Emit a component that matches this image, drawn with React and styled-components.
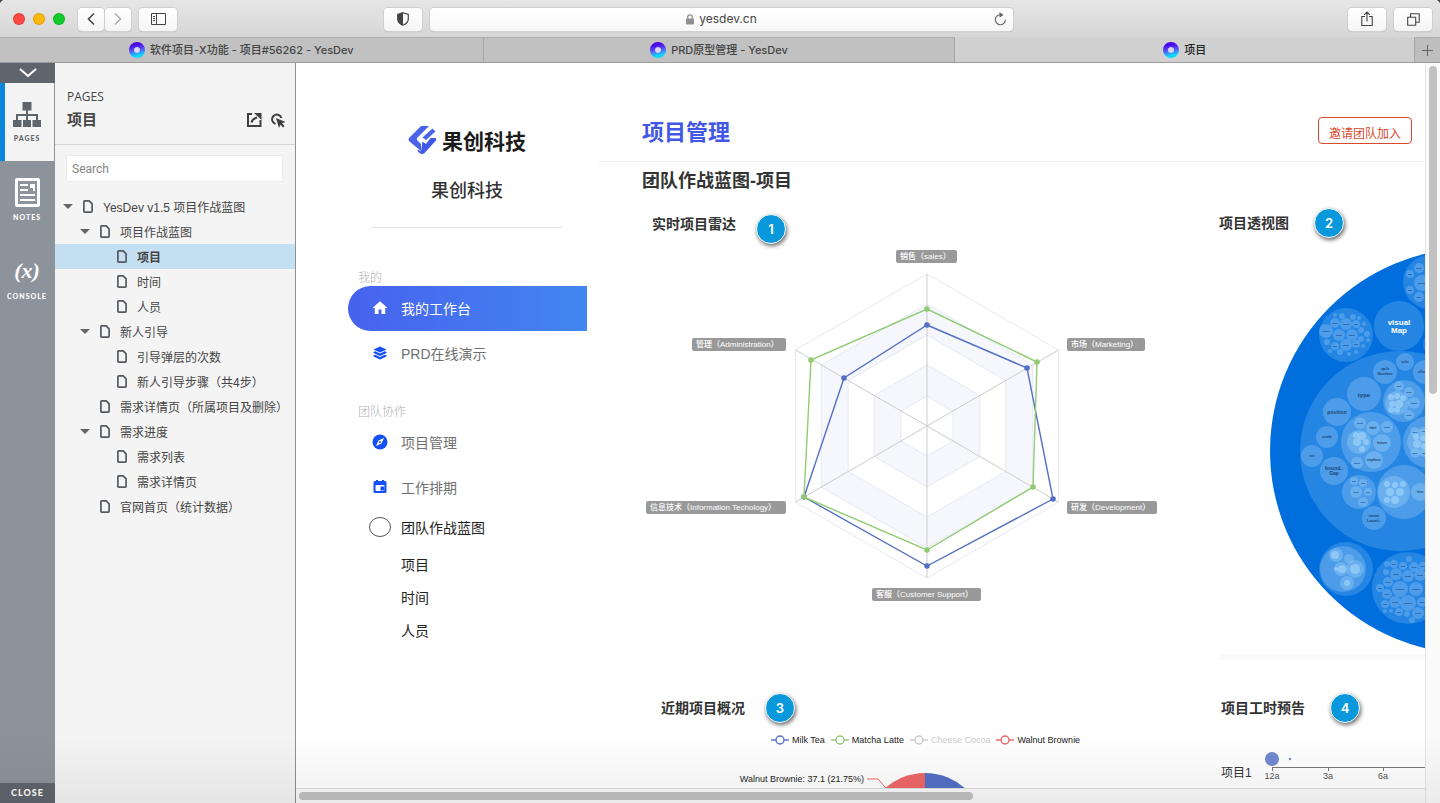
import React from "react";
import styled, { createGlobalStyle } from "styled-components";
import { MdHome } from "react-icons/md";

const GlobalStyle = createGlobalStyle`
  * {
    box-sizing: border-box;
  }
  body {
    margin: 0;
    background: #4a4550;
    font-family: "Liberation Sans", "Noto Sans CJK SC", sans-serif;
    color: #333;
  }
  h1, h2, h3, p, ul {
    margin: 0;
    padding: 0;
    font-weight: 500;
  }
  ul {
    list-style: none;
  }
  a {
    color: inherit;
    text-decoration: none;
  }
  button, input {
    font-family: inherit;
  }
  svg {
    display: block;
    flex: none;
  }
`;

const Window = styled.div`
  position: relative;
  display: flex;
  flex-direction: column;
  height: 100vh;
  overflow: hidden;
  border-radius: 5px 5px 0 0;
  background: #fff;
`;

const Shade = styled.div`
  position: absolute;
  left: 0;
  right: 0;
  bottom: 0;
  height: 70px;
  pointer-events: none;
  background: linear-gradient(rgba(0, 0, 0, 0), rgba(0, 0, 0, 0.06));
`;

/* browser chrome */

const Toolbar = styled.header`
  flex: none;
  display: grid;
  grid-template-columns: 384fr 629fr 427fr;
  align-items: center;
  height: 37px;
  padding-top: 1px;
  background: linear-gradient(#e6e6e6, #d6d6d6);
`;

const ToolGroup = styled.div`
  display: flex;
  align-items: center;
  gap: 8px;
  min-width: 0;
  justify-content: ${props => (props.$end ? "flex-end" : "flex-start")};
  padding-left: ${props => (props.$start ? "13px" : "0")};
  padding-right: ${props => (props.$end ? "8px" : "0")};
`;

const Lights = styled.div`
  display: flex;
  gap: 8px;
  margin-right: 5px;
`;

const Light = styled.span`
  width: 12px;
  height: 12px;
  border-radius: 50%;
  background: ${props => props.$color};
  box-shadow: inset 0 0 0 1px rgba(0, 0, 0, 0.12);
`;

const Pair = styled.div`
  display: flex;
  gap: 1px;
`;

const ToolButton = styled.button`
  display: flex;
  align-items: center;
  justify-content: center;
  width: ${props => (props.$narrow ? "26px" : "38px")};
  height: 23px;
  padding: 0;
  border: 0;
  border-radius: 4px;
  background: linear-gradient(#fff, #f5f5f5);
  box-shadow: 0 0 0 1px #cfcfcf, 0 1px 1px #aaa;
  color: #444;
`;

const AddressBar = styled.div`
  flex: 1;
  display: grid;
  grid-template-columns: 20px 1fr 20px;
  align-items: center;
  height: 23px;
  padding: 0 3px;
  border-radius: 4px;
  background: linear-gradient(#fff, #f7f7f7);
  box-shadow: 0 0 0 1px #cfcfcf, 0 1px 1px #aaa;
`;

const Address = styled.div`
  grid-column: 2;
  display: flex;
  align-items: center;
  justify-content: center;
  gap: 5px;
  font: 12px/16px Inter, sans-serif;
  color: #444;
`;

const ReloadButton = styled.button`
  display: flex;
  justify-content: center;
  padding: 0;
  border: 0;
  background: none;
  color: #666;
`;

const TabBar = styled.nav`
  flex: none;
  display: flex;
  height: 26px;
  border-bottom: 1px solid #9b9b9b;
`;

const Tab = styled.a`
  flex: ${props => props.$grow} 1 0;
  min-width: 0;
  display: flex;
  align-items: center;
  justify-content: center;
  gap: 5px;
  border-top: 1px solid ${props => (props.$active ? "#d3d3d3" : "#adadad")};
  border-right: 1px solid #a5a5a5;
  background: ${props => (props.$active ? "#d0d0d0" : "#c1c1c1")};
  font: 500 11px/16px Inter, "Noto Sans CJK SC", sans-serif;
  color: ${props => (props.$active ? "#222" : "#444")};
  white-space: nowrap;
`;

const NewTab = styled.button`
  display: flex;
  align-items: center;
  justify-content: center;
  width: 25px;
  padding: 0;
  border: 0;
  border-top: 1px solid #adadad;
  background: #bebebe;
  color: #666;
`;

const Body = styled.div`
  flex: 1;
  display: flex;
  min-height: 0;
`;

/* icon rail */

const Rail = styled.aside`
  flex: none;
  display: flex;
  flex-direction: column;
  width: 55px;
  background: #8c939b;
  color: #fff;
`;

const RailBar = styled.button`
  display: flex;
  align-items: center;
  justify-content: center;
  height: 20px;
  padding: 0;
  border: 0;
  background: #5f656c;
  color: #fff;
  font: 900 9px/12px Lato, sans-serif;
  letter-spacing: 1px;
`;

const RailItem = styled.button`
  display: flex;
  flex-direction: column;
  align-items: center;
  justify-content: center;
  gap: 5px;
  height: 78px;
  padding: 0;
  border: 0;
  border-right: 1px solid #8c939b;
  background: ${props => (props.$active ? "#f4f4f4" : "none")};
  box-shadow: ${props => (props.$active ? "inset 5px 0 0 #0a87dd" : "none")};
  color: ${props => (props.$active ? "#5f656c" : "#fff")};
  font: 900 7px/10px Lato, sans-serif;
  letter-spacing: 1px;
`;

const Variable = styled.span`
  font: italic bold 22px/30px "Liberation Serif", serif;
  letter-spacing: 0;
`;

const Spacer = styled.div`
  flex: 1;
`;

/* page tree */

const Sidebar = styled.aside`
  flex: none;
  width: 241px;
  border-right: 1px solid #8f8f8f;
  background: #f4f4f4;
  color: #444;
`;

const SidebarHead = styled.div`
  height: 82px;
  padding: 26px 9px 0 12px;
  border-bottom: 1px solid #d5d5d5;
`;

const SidebarLabel = styled.p`
  font: 500 12px/16px "Open Sans", sans-serif;
`;

const SidebarTitle = styled.div`
  display: flex;
  align-items: center;
  gap: 8px;
  height: 30px;

  h2 {
    flex: 1;
    font-size: 15px;
    font-weight: 700;
    line-height: 24px;
  }
`;

const IconButton = styled.button`
  padding: 0;
  border: 0;
  background: none;
  color: #3f3f3f;
`;

const Search = styled.input`
  display: block;
  width: 217px;
  height: 27px;
  margin: 10px 0 12px 11px;
  padding: 0 5px;
  border: 1px solid #ececec;
  background: #fff;
  font-family: Roboto, sans-serif;
  font-size: 12px;

  &::placeholder {
    color: #858585;
  }
`;

const TreeRow = styled.li`
  display: flex;
  align-items: center;
  height: 25px;
  padding-left: ${props => 8 + props.$level * 17}px;
  background: ${props => (props.$selected ? "#c4dff1" : "none")};
  font-size: 12px;
  font-weight: ${props => (props.$selected ? 700 : 400)};
  white-space: nowrap;

  a {
    display: flex;
    align-items: center;
    gap: 10px;
  }
`;

const Toggle = styled.span`
  width: 20px;
`;

const ToggleButton = styled.button`
  display: block;
  padding: 0;
  border: 0;
  background: none;
  color: #666;
`;

/* prototype viewport */

const Viewport = styled.div`
  flex: 1;
  min-width: 0;
  display: grid;
  grid-template-columns: minmax(0, 1fr) 15px;
  grid-template-rows: minmax(0, 1fr) 15px;
`;

const Canvas = styled.div`
  display: flex;
  overflow: hidden;
`;

const TrackY = styled.div`
  grid-row: span 2;
  padding: 3px 3px 0;
  border-left: 1px solid #e6e6e6;
  background: #fafafa;
`;

const ThumbY = styled.div`
  width: 8px;
  height: 328px;
  border-radius: 4px;
  background: #c1c1c1;
`;

const TrackX = styled.div`
  padding: 3px;
  border-top: 1px solid #e0e0e0;
  background: #fafafa;
`;

const ThumbX = styled.div`
  width: 60%;
  height: 8px;
  border-radius: 4px;
  background: #c1c1c1;
`;

const Menu = styled.nav`
  flex: none;
  width: 302px;
  padding-top: 63px;
`;

const Brand = styled.div`
  display: flex;
  flex-direction: column;
  align-items: center;
  margin-left: 40px;
`;

const Logo = styled.div`
  display: flex;
  align-items: center;
  gap: 5px;
  height: 28px;
  font-size: 21px;
  font-weight: 700;
  color: #1c1c1c;
`;

const TeamName = styled.p`
  margin-top: 23px;
  font-size: 18px;
  line-height: 28px;
`;

const Divider = styled.div`
  width: 191px;
  height: 1px;
  margin-top: 22px;
  background: #e4e4e4;
`;

const MenuLabel = styled.p`
  margin-top: ${props => (props.$first ? "42px" : "28px")};
  padding-left: 62px;
  font-size: 12px;
  font-weight: 300;
  line-height: 16px;
  color: #b0b0b0;
`;

const MenuItem = styled.a`
  display: grid;
  grid-template-columns: 22px 1fr;
  align-items: center;
  justify-items: start;
  gap: 10px;
  height: 45px;
  margin-left: 52px;
  margin-right: 11px;
  padding-left: 21px;
  padding-bottom: 1px;
  border-radius: 23px 0 0 23px;
  background: ${props =>
    props.$active ? "linear-gradient(90deg, #4762ee, #4286f0)" : "none"};
  color: ${props => (props.$active ? "#fff" : "#707070")};
  font-size: 14px;

  svg {
    justify-self: center;
    color: ${props => (props.$active ? "#fff" : "#1450f5")};
  }
`;

const MenuGroup = styled(MenuItem)`
  height: 34px;
  margin-bottom: 5px;
  color: #222;
`;

const SubItem = styled.a`
  display: block;
  padding-left: 105px;
  font-size: 14px;
  line-height: 33px;
  color: #222;
`;

const Main = styled.main`
  flex: 1;
  min-width: 0;
  padding-top: 41px;
`;

const MainHead = styled.div`
  display: flex;
  align-items: flex-start;
  justify-content: space-between;
  height: 58px;
  padding: 13px 13px 0 44px;
  border-bottom: 1px solid #efefef;

  h1 {
    font-size: 22px;
    font-weight: 700;
    line-height: 32px;
    color: #4257e4;
  }
`;

const InviteButton = styled.button`
  width: 94px;
  height: 27px;
  padding: 3px 0 0;
  border: 1px solid #d9482f;
  border-radius: 4px;
  background: #fff;
  color: #d9482f;
  font-size: 12px;
`;

const BoardTitle = styled.h2`
  padding-left: 44px;
  font-size: 18px;
  font-weight: 700;
  line-height: 38px;
`;

const Board = styled.div`
  display: grid;
  grid-template-columns: 577px 406px;
  row-gap: 33px;
  padding-left: 44px;
`;

const Panel = styled.section`
  padding-top: ${props => props.$top || 0}px;
`;

const PanelHead = styled.div`
  display: flex;
  align-items: ${props => (props.$raised ? "flex-start" : "center")};
  gap: ${props => (props.$wide ? "25px" : "20px")};
  height: 30px;
  padding-left: ${props => props.$indent || 0}px;

  h3 {
    font-size: 14px;
    font-weight: 700;
    line-height: 20px;
  }
`;

const Marker = styled.span`
  display: flex;
  align-items: center;
  justify-content: center;
  width: 30px;
  height: 30px;
  border: 1px solid #fff;
  border-radius: 50%;
  background: #0a98dd;
  box-shadow: 1px 2px 4px rgba(0, 0, 0, 0.6);
  color: #fff;
  font: 600 13px/16px Inter, sans-serif;
`;

const RadarChart = styled.svg`
  margin-top: 1px;
`;

const BubbleChart = styled.svg`
  margin: 10px 0 0 51px;
`;

const PanelFoot = styled.div`
  height: 6px;
  background: #fafafa;
`;

const Legend = styled.ul`
  display: flex;
  gap: 6px;
  margin-top: 10px;
  padding-left: 129px;
  font-size: 9px;
  line-height: 14px;
`;

const LegendItem = styled.li`
  display: flex;
  align-items: center;
  gap: 3px;
  color: ${props => (props.$off ? "#ccc" : "#222")};
  white-space: nowrap;
`;

const HourRow = styled.div`
  display: flex;
  gap: 12px;
  margin-top: 24px;
  padding-left: 2px;
  font-size: 12px;

  span {
    padding-top: 16px;
    line-height: 20px;
    white-space: nowrap;
  }
`;

const Favicon = ({ id }) => (
  <svg width="16" height="16" viewBox="0 0 16 16">
    <defs>
      <linearGradient id={id} x1="0.4" y1="0" x2="0.6" y2="1">
        <stop offset="0" stopColor="#4a05e8" />
        <stop offset="0.5" stopColor="#5a55f5" />
        <stop offset="1" stopColor="#0cd8ff" />
      </linearGradient>
    </defs>
    <circle cx="8" cy="8" r="5.4" fill="none" stroke={`url(#${id})`} strokeWidth="5.2" />
    <circle cx="8" cy="8" r="2.8" fill="#d9d4f5" />
  </svg>
);

const Stroke = ({ w, h, d, width = 1.2 }) => (
  <svg
    width={w}
    height={h}
    viewBox={`0 0 ${w} ${h}`}
    fill="none"
    stroke="currentColor"
    strokeWidth={width}
  >
    <path d={d} />
  </svg>
);

const PageIcon = () => (
  <svg width="10" height="13" viewBox="0 0 10 13">
    <path
      d="M1.700 0.900H6.200L9.100 3.800V11.300Q9.100 12.100 8.300 12.100H1.700Q0.900 12.100 0.900 11.300V1.700Q0.900 0.900 1.700 0.900Z"
      fill="none"
      stroke="#555a60"
      strokeWidth="1.700"
    />
  </svg>
);

const LogoMark = () => (
  <svg width="29" height="30" viewBox="0 0 29 30">
    <path
      d="M13 1H21L9.500 12.500Q8 14 9.500 15.500L13 19V26L1.500 16.500Q-0.500 14.500 1.500 12.500Z"
      fill="#4a63ea"
    />
    <path d="M24.500 3.500L27.500 6.500L18 15L14.500 12.500Z" fill="#4a63ea" />
    <path
      d="M14.500 16.500L18 19L22.500 13H27.500Q29 14 28 15.500L16.500 28Q14 30 11.500 28L9.500 26L10 24.500L13 26.500Z"
      fill="#3f59e6"
    />
  </svg>
);

const LayersIcon = () => (
  <svg width="14" height="14" viewBox="0 0 14 14" fill="currentColor">
    <path d="M7 0.500L13.500 3.500L7 6.500L0.500 3.500Z" />
    <path d="M0.500 6L2.300 5.200L7 7.400L11.700 5.200L13.500 6V7L7 10L0.500 7Z" />
    <path d="M0.500 9.500L2.300 8.700L7 10.900L11.700 8.700L13.500 9.500V10.500L7 13.500L0.500 10.500Z" />
  </svg>
);

const CompassIcon = () => (
  <svg width="16" height="16" viewBox="0 0 16 16">
    <circle cx="8" cy="8" r="7.500" fill="currentColor" />
    <path d="M12 4L9.500 9.500L4 12L6.500 6.500Z" fill="#fff" />
    <circle cx="8" cy="8" r="1" fill="currentColor" />
  </svg>
);

const ScheduleIcon = () => (
  <svg width="14" height="14" viewBox="0 0 14 14">
    <path
      d="M2 1H3V0H5V1H9V0H11V1H12Q13.500 1 13.500 2.500V11.500Q13.500 13 12 13H2Q0.500 13 0.500 11.500V2.500Q0.500 1 2 1Z"
      fill="currentColor"
    />
    <rect x="2.500" y="5" width="9" height="6" rx="1" fill="#fff" />
    <rect x="7.500" y="6.500" width="4" height="4" fill="currentColor" />
  </svg>
);

const pages = [
  { level: 0, text: "YesDev v1.5 项目作战蓝图", open: true },
  { level: 1, text: "项目作战蓝图", open: true },
  { level: 2, text: "项目", selected: true },
  { level: 2, text: "时间" },
  { level: 2, text: "人员" },
  { level: 1, text: "新人引导", open: true },
  { level: 2, text: "引导弹层的次数" },
  { level: 2, text: "新人引导步骤（共4步）" },
  { level: 1, text: "需求详情页（所属项目及删除）" },
  { level: 1, text: "需求进度", open: true },
  { level: 2, text: "需求列表" },
  { level: 2, text: "需求详情页" },
  { level: 1, text: "官网首页（统计数据）" }
];

// radar, centre 285,181
const hexagon = r =>
  [0, 1, 2, 3, 4, 5]
    .map(i => {
      const a = (Math.PI / 3) * i - Math.PI / 2;
      return `${285 + r * Math.cos(a)},${181 + r * Math.sin(a)}`;
    })
    .join(" ");

const rings = [
  { r: 152, fill: "#fff" },
  { r: 122, fill: "#f6f7fc" },
  { r: 91, fill: "#fff" },
  { r: 61, fill: "#f6f7fc" },
  { r: 30, fill: "#fff" }
];

const series = [
  {
    color: "#5470c6",
    points: [[285, 80], [385, 123], [411, 254], [285, 321], [162, 252], [202, 133]]
  },
  {
    color: "#91cc75",
    points: [[285, 64], [395, 117], [391, 242], [285, 305], [162, 252], [169, 115]]
  }
];

const radarLabels = [
  { x: 254, y: 5, w: 61, text: "销售（sales）" },
  { x: 50, y: 93, w: 94, text: "管理（Administration）" },
  { x: 425, y: 93, w: 78, text: "市场（Marketing）" },
  { x: 4, y: 256, w: 140, text: "信息技术（Information Techology）" },
  { x: 425, y: 256, w: 90, text: "研发（Development）" },
  { x: 230, y: 343, w: 109, text: "客服（Customer Support）" }
];

const Radar = () => (
  <RadarChart width="520" height="360" viewBox="0 0 520 360">
    {rings.map(ring => (
      <polygon key={ring.r} points={hexagon(ring.r)} fill={ring.fill} stroke="#e6e9f1" />
    ))}
    <path
      d="M285 29V333M153.500 105L416.500 257M416.500 105L153.500 257"
      stroke="#ccc"
      fill="none"
    />
    {series.map(item => (
      <g key={item.color} fill={item.color}>
        <polygon
          points={item.points.join(" ")}
          fill="none"
          stroke={item.color}
          strokeWidth="1.4"
        />
        {item.points.map(([x, y]) => (
          <circle key={`${x}-${y}`} cx={x} cy={y} r="2.800" />
        ))}
      </g>
    ))}
    {radarLabels.map(label => (
      <g key={label.text}>
        <rect x={label.x} y={label.y} width={label.w} height="13" rx="2" fill="#999" />
        <text x={label.x + 4} y={label.y + 9} fontSize="8" fontWeight="500" fill="#fff">
          {label.text}
        </text>
      </g>
    ))}
  </RadarChart>
);

// [cx, cy, r], one list per nesting depth
const groups = [
  [130, 203, 100], [129, 78, 25], [160, 34, 27], [76, 87, 27], [166, 96, 13],
  [76, 321, 27], [138, 340, 36]
];

const nodes = [
  [94, 146, 17], [67, 164, 14], [115, 124, 12], [135, 114, 9], [155, 124, 12],
  [57, 189, 11], [42, 208, 11], [64, 223, 14], [101, 194, 30], [134, 153, 21],
  [159, 194, 26], [89, 244, 17], [134, 244, 27], [104, 270, 12], [73, 321, 23],
  [56, 83, 7], [65, 75, 5], [76, 76, 6], [86, 76, 4], [69, 87, 6], [82, 87, 6],
  [65, 98, 4], [76, 97, 6], [86, 96, 4], [57, 94, 3], [91, 82, 3], [91, 91, 3],
  [72, 68, 3], [83, 69, 3], [89, 70, 2], [94, 76, 2], [97, 86, 3], [93, 98, 2],
  [70, 104, 3], [79, 106, 2], [60, 103, 2], [86, 104, 2], [65, 67, 2], [98, 92, 2],
  [149, 20, 5], [140, 26, 4], [152, 35, 8], [140, 42, 4], [149, 49, 5],
  [117, 316, 3], [124, 316, 4], [133, 318, 4], [144, 319, 5], [153, 318, 4],
  [139, 311, 3], [116, 324, 3], [126, 326, 6], [138, 328, 6], [150, 327, 6],
  [118, 334, 5], [110, 340, 4], [130, 341, 8], [146, 341, 7], [117, 346, 5],
  [115, 356, 4], [125, 354, 6], [138, 355, 8], [152, 354, 5], [129, 364, 4],
  [137, 366, 3], [148, 365, 6], [142, 372, 3], [115, 363, 2], [121, 363, 2]
];

const leaves = [
  [89, 194, 12], [112, 195, 9], [103, 180, 7], [90, 175, 6], [117, 179, 6],
  [104, 212, 9], [87, 215, 6], [127, 155, 12], [129, 138, 5], [139, 144, 5],
  [144, 155, 6], [139, 167, 5], [150, 194, 13], [145, 184, 5], [145, 205, 5],
  [154, 183, 4], [154, 205, 4], [124, 244, 16], [150, 244, 9], [84, 233, 4],
  [93, 235, 4], [86, 244, 6], [98, 244, 4], [93, 254, 5], [66, 307, 7],
  [79, 311, 5], [71, 321, 7], [85, 321, 9], [77, 335, 7]
];

const seeds = [
  [86, 187, 3], [92, 188, 4], [87, 194, 4], [96, 194, 3], [92, 201, 3],
  [121, 149, 3], [127, 148, 3], [133, 150, 3], [122, 156, 3], [129, 156, 4],
  [121, 162, 3], [127, 162, 3], [117, 236, 3], [125, 237, 3], [133, 236, 3],
  [120, 244, 4], [130, 244, 4], [117, 252, 3], [125, 252, 4], [146, 189, 3],
  [153, 190, 3], [147, 196, 4], [154, 198, 3], [65, 307, 4], [72, 321, 4],
  [85, 321, 5], [77, 335, 3], [66, 321, 2]
];

const bubbleTexts = [
  { x: 94, y: 149, size: 6, text: "type" },
  { x: 67, y: 166, size: 5, text: "position" },
  { x: 115, y: 122, size: 4, text: "split" },
  { x: 115, y: 127, size: 4, text: "Number" },
  { x: 135, y: 115, size: 3, text: "color" },
  { x: 152, y: 125, size: 3, text: "offset" },
  { x: 57, y: 190, size: 4, text: "scale" },
  { x: 42, y: 209, size: 3, text: "min" },
  { x: 64, y: 222, size: 5, text: "bound.." },
  { x: 64, y: 227, size: 5, text: "Gap" },
  { x: 104, y: 269, size: 4, text: "name" },
  { x: 104, y: 274, size: 4, text: "Locati.." },
  { x: 112, y: 196, size: 3, text: "feature" },
  { x: 103, y: 181, size: 3, text: "label" },
  { x: 104, y: 213, size: 3, text: "emphasis" },
  { x: 150, y: 245, size: 3, text: "item" }
];

const Bubbles = ({ items, fill }) => (
  <g fill={fill}>
    {items.map(([x, y, r]) => (
      <circle key={`${x}-${y}-${r}`} cx={x} cy={y} r={r} />
    ))}
  </g>
);

const labelled = (x, y) => bubbleTexts.some(t => Math.abs(t.x - x) < 3 && Math.abs(t.y - y) < 5);

const Perspective = () => (
  <BubbleChart width="406" height="406" viewBox="0 0 406 406">
    <circle cx="203" cy="203" r="203" fill="#006edd" />
    <Bubbles items={groups} fill="#2485e3" />
    <Bubbles items={nodes} fill="rgba(115, 180, 240, 0.5)" />
    <Bubbles items={leaves} fill="rgba(135, 195, 245, 0.5)" />
    <Bubbles items={seeds} fill="rgba(165, 215, 250, 0.6)" />
    <g fill="rgba(10, 60, 120, 0.45)">
      {nodes
        .concat(leaves)
        .filter(([x, y, r]) => r >= 4 && r <= 8 && !(x < 90 && y > 300) && !labelled(x, y))
        .map(([x, y, r]) => (
          <rect key={`${x}-${y}`} x={x - r / 2} y={y} width={r} height="1" />
        ))}
    </g>
    <g fill="#fff" fontSize="8" fontWeight="700" textAnchor="middle">
      <text x="129" y="77">visual</text>
      <text x="129" y="85">Map</text>
    </g>
    <g fill="#1d4675" fontWeight="700" textAnchor="middle">
      {bubbleTexts.map(item => (
        <text key={`${item.x}-${item.y}`} x={item.x} y={item.y} fontSize={item.size}>
          {item.text}
        </text>
      ))}
    </g>
  </BubbleChart>
);

const legend = [
  { text: "Milk Tea", color: "#5470c6" },
  { text: "Matcha Latte", color: "#91cc75" },
  { text: "Cheese Cocoa", color: "#ccc", off: true },
  { text: "Walnut Brownie", color: "#ee6666" }
];

const BrowserChrome = () => (
  <>
    <Toolbar>
      <ToolGroup $start>
        <Lights>
          <Light $color="#fb4943" />
          <Light $color="#fdb90c" />
          <Light $color="#14cb2e" />
        </Lights>
        <Pair>
          <ToolButton $narrow aria-label="Back">
            <Stroke w={8} h={14} width={1.6} d="M7 1.500L1.500 7L7 12.500" />
          </ToolButton>
          <ToolButton $narrow aria-label="Forward" disabled>
            <svg width="8" height="14" viewBox="0 0 8 14" fill="none" stroke="#aaa" strokeWidth="1.500">
              <path d="M1 1.500L6.500 7L1 12.500" />
            </svg>
          </ToolButton>
        </Pair>
        <ToolButton aria-label="Sidebar">
          <Stroke w={15} h={12} width={1} d="M0.500 0.500H14.500V11.500H0.500ZM5.500 0.500V11.500M2 3.500H4M2 5.500H4M2 7.500H4" />
        </ToolButton>
      </ToolGroup>
      <ToolGroup>
        <ToolButton aria-label="Privacy report">
          <svg width="12" height="14" viewBox="0 0 12 14">
            <path
              d="M6 0.700L11.300 2.500V7Q11.300 11 6 13.300Q0.700 11 0.700 7V2.500Z"
              fill="none"
              stroke="#444"
              strokeWidth="1.200"
            />
            <path d="M6 0.700V13.300Q0.700 11 0.700 7V2.500Z" fill="#444" />
          </svg>
        </ToolButton>
        <AddressBar>
          <Address>
            <svg width="8" height="11" viewBox="0 0 8 11">
              <rect y="4.500" width="8" height="6" rx="1" fill="#8f8f8f" />
              <path d="M1.700 5V3.200Q1.700 0.800 4 0.800T6.300 3.200V5" fill="none" stroke="#8f8f8f" strokeWidth="1.200" />
            </svg>
            yesdev.cn
          </Address>
          <ReloadButton aria-label="Reload">
            <svg width="13" height="14" viewBox="0 0 13 14">
              <path d="M6 2.800A5 5 0 1 0 11.300 7.500" fill="none" stroke="currentColor" strokeWidth="1.100" />
              <path d="M5.500 0L9.500 3L5.500 5.800Z" fill="currentColor" />
            </svg>
          </ReloadButton>
        </AddressBar>
      </ToolGroup>
      <ToolGroup $end>
        <ToolButton aria-label="Share">
          <Stroke w={12} h={16} width={1.1} d="M4 5.500H0.800V14.500H11.200V5.500H8M6 10.500V1M3.200 3.800L6 1L8.800 3.800" />
        </ToolButton>
        <ToolButton aria-label="Show all tabs">
          <Stroke w={13} h={13} width={1.1} d="M0.700 4.200H8.700V12.200H0.700ZM3.500 4V0.700H12.200V9.200H9" />
        </ToolButton>
      </ToolGroup>
    </Toolbar>
    <TabBar>
      <Tab href="#x" $grow={484}>
        <Favicon id="fav1" />
        软件项目-X功能 - 项目#56262 - YesDev
      </Tab>
      <Tab href="#prd" $grow={472}>
        <Favicon id="fav2" />
        PRD原型管理 - YesDev
      </Tab>
      <Tab href="#project" $grow={460} $active>
        <Favicon id="fav3" />
        项目
      </Tab>
      <NewTab aria-label="New tab">
        <Stroke w={11} h={11} width={1} d="M5.500 0V11M0 5.500H11" />
      </NewTab>
    </TabBar>
  </>
);

const IconRail = () => (
  <Rail>
    <RailBar aria-label="Collapse">
      <Stroke w={18} h={10} width={2} d="M1 1L9 8L17 1" />
    </RailBar>
    <RailItem $active>
      <svg width="28" height="26" viewBox="0 0 28 26" fill="currentColor">
        <path d="M9.500 0H18.500V8.500H15V12H25V18H28V25H19.500V18H23V14H15V18H18V25H10V18H13V14H5V18H8.500V25H0V18H3V12H13V8.500H9.500Z" />
      </svg>
      PAGES
    </RailItem>
    <RailItem>
      <svg width="25" height="29" viewBox="0 0 25 29">
        <rect width="25" height="29" rx="2" fill="#fff" />
        <rect x="3" y="3" width="19" height="23" fill="#8c939b" />
        <path d="M5 7H13M5 12H13M5 17H20M5 22H20" stroke="#fff" strokeWidth="2" />
        <path d="M15 6H20V13H18V10H15Z" fill="#fff" />
      </svg>
      NOTES
    </RailItem>
    <RailItem>
      <Variable>(x)</Variable>
      CONSOLE
    </RailItem>
    <Spacer />
    <RailBar>CLOSE</RailBar>
  </Rail>
);

const PageTree = () => (
  <Sidebar>
    <SidebarHead>
      <SidebarLabel>PAGES</SidebarLabel>
      <SidebarTitle>
        <h2>项目</h2>
        <IconButton aria-label="Open page">
          <svg width="15" height="14" viewBox="0 0 15 14" fill="none" stroke="currentColor" strokeWidth="2">
            <path d="M5 1H1V13H13.500V7" />
            <path d="M4.500 9.500Q5 6 10 4.500" />
            <path d="M7 0H14.500V7Z" fill="currentColor" stroke="none" />
          </svg>
        </IconButton>
        <IconButton aria-label="Show hotspots">
          <svg width="16" height="15" viewBox="0 0 16 15">
            <path d="M5.500 11A4.800 4.800 0 1 1 11.500 5" fill="none" stroke="currentColor" strokeWidth="2" />
            <path d="M6 5L15.500 9L12 10.300L14.500 13L13 14.500L10.500 11.700L9 15Z" fill="currentColor" />
          </svg>
        </IconButton>
      </SidebarTitle>
    </SidebarHead>
    <Search type="search" placeholder="Search" aria-label="Search" />
    <ul>
      {pages.map((page, index) => (
        <TreeRow key={index} $level={page.level} $selected={page.selected}>
          <Toggle>
            {page.open && (
              <ToggleButton aria-label="Toggle">
                <svg width="10" height="5" viewBox="0 0 10 5">
                  <path d="M0 0H10L5 5Z" fill="currentColor" />
                </svg>
              </ToggleButton>
            )}
          </Toggle>
          <a href="#page">
            <PageIcon />
            {page.text}
          </a>
        </TreeRow>
      ))}
    </ul>
  </Sidebar>
);

const AppMenu = () => (
  <Menu>
    <Brand>
      <Logo>
        <LogoMark />
        果创科技
      </Logo>
      <TeamName>果创科技</TeamName>
      <Divider />
    </Brand>
    <MenuLabel $first>我的</MenuLabel>
    <MenuItem href="#home" $active>
      <MdHome size={18} />
      我的工作台
    </MenuItem>
    <MenuItem href="#prd">
      <LayersIcon />
      PRD在线演示
    </MenuItem>
    <MenuLabel>团队协作</MenuLabel>
    <MenuItem href="#projects">
      <CompassIcon />
      项目管理
    </MenuItem>
    <MenuItem href="#schedule">
      <ScheduleIcon />
      工作排期
    </MenuItem>
    <MenuGroup href="#board">
      <svg width="22" height="20" viewBox="0 0 22 20">
        <ellipse cx="11" cy="10" rx="10.500" ry="9.500" fill="#fff" stroke="#555" />
      </svg>
      团队作战蓝图
    </MenuGroup>
    <SubItem href="#project">项目</SubItem>
    <SubItem href="#time">时间</SubItem>
    <SubItem href="#people">人员</SubItem>
  </Menu>
);

const App = () => (
  <Window>
    <GlobalStyle />
    <BrowserChrome />
    <Body>
      <IconRail />
      <PageTree />
      <Viewport>
        <Canvas>
          <AppMenu />
          <Main>
            <MainHead>
              <h1>项目管理</h1>
              <InviteButton>邀请团队加入</InviteButton>
            </MainHead>
            <BoardTitle>团队作战蓝图-项目</BoardTitle>
            <Board>
              <Panel $top={14}>
                <PanelHead $indent={10} $raised>
                  <h3>实时项目雷达</h3>
                  <Marker>1</Marker>
                </PanelHead>
                <Radar />
              </Panel>
              <Panel $top={8}>
                <PanelHead $wide>
                  <h3>项目透视图</h3>
                  <Marker>2</Marker>
                </PanelHead>
                <Perspective />
                <PanelFoot />
              </Panel>
              <Panel>
                <PanelHead $indent={19}>
                  <h3>近期项目概况</h3>
                  <Marker>3</Marker>
                </PanelHead>
                <Legend>
                  {legend.map(item => (
                    <LegendItem key={item.text} $off={item.off}>
                      <svg width="18" height="10" viewBox="0 0 18 10" fill="#fff" stroke={item.color}>
                        <path d="M0 5H18" strokeWidth="1.400" />
                        <circle cx="9" cy="5" r="4" strokeWidth="1.400" />
                      </svg>
                      {item.text}
                    </LegendItem>
                  ))}
                </Legend>
                <svg width="560" height="160" viewBox="0 0 560 160">
                  <path d="M283 86V26A60 60 0 0 1 283 146Z" fill="#5470c6" />
                  <path d="M283 86V26A60 60 0 0 0 283 146Z" fill="#ee6666" />
                  <path d="M225 32H236L244 41" fill="none" stroke="#ee6666" />
                  <text x="222" y="35" fontSize="9" textAnchor="end" fill="#222">
                    Walnut Brownie: 37.1 (21.75%)
                  </text>
                </svg>
              </Panel>
              <Panel>
                <PanelHead $indent={2} $wide>
                  <h3>项目工时预告</h3>
                  <Marker>4</Marker>
                </PanelHead>
                <HourRow>
                  <span>项目1</span>
                  <svg width="350" height="40" viewBox="0 0 350 40">
                    <path d="M8 20.500H350M8.500 20V24M64.500 20V24M119.500 20V24" stroke="#777" fill="none" />
                    <circle cx="8" cy="12" r="7" fill="#7289d0" />
                    <circle cx="26" cy="12" r="1.200" fill="#7289d0" />
                    <g fontSize="9" textAnchor="middle" fill="#555">
                      <text x="8" y="32">12a</text>
                      <text x="64" y="32">3a</text>
                      <text x="119" y="32">6a</text>
                    </g>
                  </svg>
                </HourRow>
              </Panel>
            </Board>
          </Main>
        </Canvas>
        <TrackY>
          <ThumbY />
        </TrackY>
        <TrackX>
          <ThumbX />
        </TrackX>
      </Viewport>
    </Body>
    <Shade />
  </Window>
);

export default App;
